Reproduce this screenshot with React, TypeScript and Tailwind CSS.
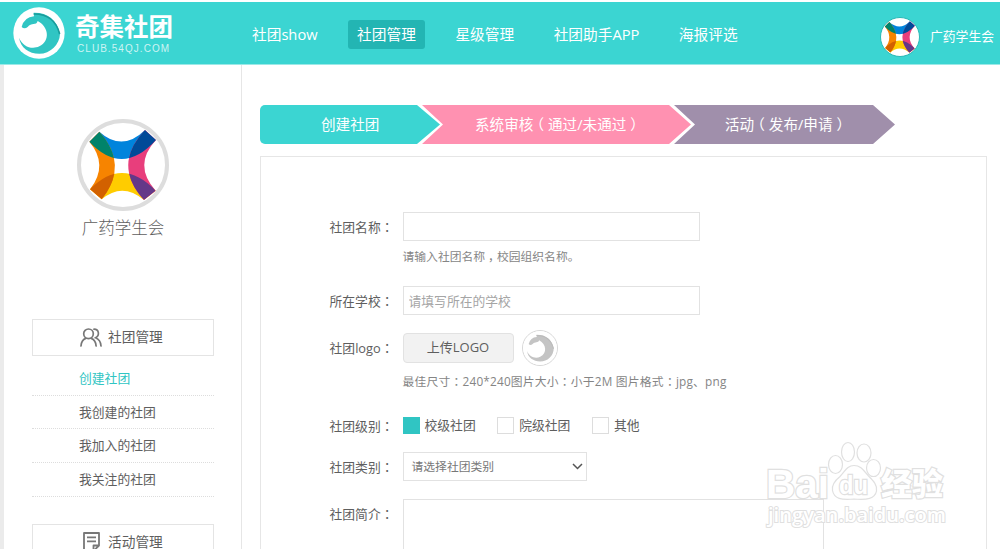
import React from "react";
import clsx from "clsx";

const navItems = [
    { label: "社团show" },
    { label: "社团管理", active: true },
    { label: "星级管理" },
    { label: "社团助手APP" },
    { label: "海报评选" },
];

const clubLinks = ["创建社团", "我创建的社团", "我加入的社团", "我关注的社团"];

const levels = ["校级社团", "院级社团", "其他"];

export default function App() {
    return (
        <div className="h-[549px] overflow-hidden bg-white pt-[2px] font-['Open_Sans','Noto_Sans_CJK_SC',sans-serif] text-[#5e5e5e]">
            <Header />
            <div className="flex h-[484px] border-l-[4px] border-[#ebebeb]">
                <Sidebar />
                <main className="relative flex-1 pl-[18px] pt-[40px]">
                    <Steps />
                    <ClubForm />
                    <Watermark />
                </main>
            </div>
        </div>
    );
}

function Header() {
    return (
        <header className="flex h-[63px] items-center border-b border-[#9be9e7] bg-[#3bd5d2] text-white">
            <div className="flex w-[243px] items-center pl-[13px]">
                <SwirlLogo className="size-[52px]" ring="#fff" swirl="#30c5c3" shade="#1a9c9b" />
                <div className="ml-[10px] mt-[2px]">
                    <div className="text-[24.5px] font-bold leading-[27px]">奇集社团</div>
                    <div className="ml-[2px] mt-[2px] font-['Liberation_Sans',sans-serif] text-[10px] leading-[13px] tracking-[1.05px] text-white/75">
                        CLUB.54QJ.COM
                    </div>
                </div>
            </div>
            <nav className="mt-[3px] flex flex-1 gap-[21.5px] text-[14.7px]">
                {navItems.map((item) => (
                    <a
                        key={item.label}
                        className={clsx("h-[29px] whitespace-nowrap rounded-[3px] px-[9px] leading-[29px]", item.active && "bg-[#23b5b3]")}
                    >
                        {item.label}
                    </a>
                ))}
            </nav>
            <div className="mt-[8px] flex w-[120px] items-center gap-[10px]">
                <div className="size-[40px] shrink-0 rounded-full border border-[#28b9b6] bg-white">
                    <Emblem className="size-full" />
                </div>
                <span className="whitespace-nowrap text-[12.8px]">广药学生会</span>
            </div>
        </header>
    );
}

function Sidebar() {
    return (
        <aside className="w-[238px] border-r border-[#e6e6e6] pl-[28px] pt-[54px]">
            <div className="flex h-[200px] w-[182px] flex-col items-center">
                <div className="size-[92px] rounded-full border-4 border-[#ddd]">
                    <Emblem className="size-full" />
                </div>
                <div className="mt-[4px] text-[16.5px] font-light leading-[26px]">广药学生会</div>
            </div>
            <MenuTitle label="社团管理" icon={<PeopleIcon />} />
            <ul className="mb-[27px] w-[182px] pt-[6px] text-[12.8px]">
                {clubLinks.map((link, idx) => (
                    <li
                        key={link}
                        className={clsx(
                            "h-[33.7px] border-b border-dotted border-[#ddd] pl-[47px] leading-[32px]",
                            idx === 0 && "text-[#30c5c3]"
                        )}
                    >
                        {link}
                    </li>
                ))}
            </ul>
            <MenuTitle label="活动管理" icon={<NoteIcon />} />
        </aside>
    );
}

function MenuTitle({ label, icon }: { label: string; icon: React.ReactNode }) {
    return (
        <div className="flex h-[37px] w-[182px] items-center border border-[#e4e4e4] pl-[47px] text-[13.7px]">
            <span className="mr-[6px] w-[22px]">{icon}</span>
            {label}
        </div>
    );
}

function Steps() {
    return (
        <div className="flex h-[39px] text-[14.6px] leading-[39px] text-white">
            <div className="w-[180px] rounded-l-[5px] bg-[#3bd5d2] pl-[61px] [clip-path:polygon(0_0,157px_0,100%_50%,157px_100%,0_100%)]">
                创建社团
            </div>
            <div className="-ml-[18px] w-[270px] whitespace-nowrap bg-[#ff91b1] pl-[53px] [clip-path:polygon(0_0,247px_0,269px_50%,247px_100%,0_100%,21px_50%)]">
                系统审核<Mark shift="-left-[4px]">（</Mark>通过/未通过<Mark shift="left-[4px]">）</Mark>
            </div>
            <div className="-ml-[18px] w-[221px] whitespace-nowrap bg-[#a08fab] pl-[51px] [clip-path:polygon(0_0,199px_0,100%_50%,199px_100%,0_100%,21px_50%)]">
                活动<Mark shift="-left-[4px]">（</Mark>发布/申请<Mark shift="left-[4px]">）</Mark>
            </div>
        </div>
    );
}

// Nudges full-width punctuation to the middle of its cell
function Mark({ shift, children }: { shift: string; children: React.ReactNode }) {
    return <span className={clsx("relative", shift)}>{children}</span>;
}

function Colon() {
    return <span className="font-['Noto_Sans_CJK_TC',sans-serif]">：</span>;
}

function Row({ label, height, line = "leading-[29px]", children }: { label: string; height: string; line?: string; children: React.ReactNode }) {
    return (
        <div className={clsx("flex", height)}>
            <label className={clsx("mr-[9px] w-[132.5px] shrink-0 text-right text-[12.8px]", line)}>
                {label}
                <Colon />
            </label>
            <div>{children}</div>
        </div>
    );
}

function ClubForm() {
    return (
        <form className="mt-[12px] h-[420px] w-[727px] border border-[#e6e6e6] pt-[55px] text-[12.8px]">
            <Row label="社团名称" height="h-[74px]">
                <input className="block h-[29px] w-[297px] border border-[#e2e2e2] px-[5px]" />
                <p className="mt-[5px] text-[11.8px] leading-[20px] text-[#858585]">
                    请输入社团名称<Mark shift="left-[3px]">，</Mark>校园组织名称。
                </p>
            </Row>
            <Row label="所在学校" height="h-[47px]">
                <input
                    className="block h-[29px] w-[297px] border border-[#e2e2e2] px-[5px] placeholder:text-[#a5a5a5]"
                    placeholder="请填写所在的学校"
                />
            </Row>
            <Row label="社团logo" height="h-[84px]">
                <div className="flex h-[29px] items-center gap-[8px]">
                    <button type="button" className="h-[30px] w-[111px] rounded-[4px] border border-[#e2e2e2] bg-[#f2f2f2] text-[13px]">
                        上传LOGO
                    </button>
                    <div className="size-[36px] rounded-full border-[1.5px] border-[#d8d8d8]">
                        <SwirlLogo className="size-full" ring="#fff" swirl="#c4c4c4" shade="#bbb" />
                    </div>
                </div>
                <p className="mt-[9px] whitespace-nowrap text-[11.8px] leading-[20px] tracking-[0.2px] text-[#858585]">
                    最佳尺寸
                    <Colon />
                    240*240图片大小
                    <Colon />
                    小于2M 图片格式
                    <Colon />
                    jpg、png
                </p>
            </Row>
            <Row label="社团级别" height="h-[35px]" line="leading-[17px]">
                <div className="flex gap-[21.5px]">
                    {levels.map((level, idx) => (
                        <span key={level} className="flex items-center gap-[5px] leading-[17px]">
                            <i className={clsx("size-[17px] border", idx === 0 ? "border-[#30c5c3] bg-[#30c5c3]" : "border-[#ddd]")} />
                            {level}
                        </span>
                    ))}
                </div>
            </Row>
            <Row label="社团类别" height="h-[47px]">
                <div className="flex h-[29px] w-[184px] items-center justify-between border border-[#e2e2e2] pl-[8px] pr-[3px] text-[11.8px] text-[#777]">
                    请选择社团类别
                    <svg className="h-[7px] w-[11px]" viewBox="0 0 11 7" fill="none" stroke="#555" strokeWidth="1.5">
                        <path d="M1 1l4.5 4.5L10 1" />
                    </svg>
                </div>
            </Row>
            <Row label="社团简介" height="h-[100px]">
                <textarea className="block h-[100px] w-[421px] resize-none border border-[#e2e2e2]" />
            </Row>
        </form>
    );
}

function SwirlLogo({ className, ring, swirl, shade }: { className: string; ring: string; swirl: string; shade: string }) {
    return (
        <svg className={className} viewBox="39 20 156 156">
            <circle cx="117" cy="98" r="77" fill={ring} />
            <path
                d="M65 80Q73 50 102 48L101 37Q164 36 180 100A62 62 0 0 1 118 160C86 160 62 142 57 112C68 139 96 149 118 138C151 122 147 80 113 62C109 77 94 66 83 80Q73 88 65 80Z"
                fill={swirl}
            />
            <path d="M101 41Q163 40 179 101" fill="none" stroke={shade} strokeWidth="5" />
        </svg>
    );
}

function Emblem({ className }: { className: string }) {
    return (
        <svg className={className} viewBox="63 69 252 252">
            <defs>
                <clipPath id="band-top">
                    <path d="M118 95Q187 157 255 90L288 120Q187 231 88 125Z" />
                </clipPath>
                <clipPath id="band-bottom">
                    <path d="M125 298Q187 245 252 300L287 272Q187 168 90 268Z" />
                </clipPath>
            </defs>
            <path d="M118 95Q187 157 255 90L288 120Q187 231 88 125Z" fill="#0084dc" />
            <path d="M125 298Q187 245 252 300L287 272Q187 168 90 268Z" fill="#fc0" />
            <path d="M88 125Q147 195 90 268L125 298Q208 195 118 95Z" fill="#f78400" />
            <path d="M288 120Q218 195 287 272L252 300Q156 195 255 90Z" fill="#e83e7c" />
            <g clipPath="url(#band-top)">
                <path d="M88 125Q147 195 90 268L125 298Q208 195 118 95Z" fill="#00836a" />
                <path d="M288 120Q218 195 287 272L252 300Q156 195 255 90Z" fill="#004a98" />
            </g>
            <g clipPath="url(#band-bottom)">
                <path d="M88 125Q147 195 90 268L125 298Q208 195 118 95Z" fill="#d26100" />
                <path d="M288 120Q218 195 287 272L252 300Q156 195 255 90Z" fill="#643888" />
            </g>
        </svg>
    );
}

function PeopleIcon() {
    return (
        <svg className="h-[19px] w-[22px]" viewBox="0 0 22 19" fill="none" stroke="#777" strokeWidth="1.7" strokeLinecap="round">
            <circle cx="8.5" cy="5.8" r="4.8" />
            <path d="M1 18c.2-4 2-6.400 4.700-7.600M11.300 10.400c3 1.300 4.600 3.800 4.800 7.600" />
            <path d="M14 1.200c5 .2 6 6 1.600 8.600 3.400 1.400 5.200 4.200 5.400 8.200" />
        </svg>
    );
}

function NoteIcon() {
    return (
        <svg className="ml-[3px] h-[20px] w-[17px]" viewBox="0 0 17 20" fill="none" stroke="#777" strokeWidth="1.8" strokeLinejoin="round">
            <path d="M1 1h15v12.500L10.500 19H1zM16 13.500h-5.500V19M4 5.300h9M4 9.300h9" />
        </svg>
    );
}

function Watermark() {
    return (
        <svg
            className="pointer-events-none absolute left-[518px] top-[370px] h-[100px] w-[190px]"
            viewBox="760 435 190 100"
            fill="#fff"
            stroke="#e0e0e0"
            strokeWidth="1.2"
        >
            <g className="font-['Liberation_Sans','Noto_Sans_CJK_SC',sans-serif]" fontWeight="bold" paintOrder="stroke" strokeWidth="2.4">
                <text x="766" y="498" fontSize="40" textLength="63" lengthAdjust="spacingAndGlyphs">Bai</text>
                <text x="881" y="495" fontSize="31" fontWeight="900">经验</text>
            </g>
            <ellipse cx="835.5" cy="464.5" rx="7" ry="9" />
            <ellipse cx="848" cy="452" rx="6.5" ry="9.5" />
            <ellipse cx="864" cy="453" rx="7" ry="9" />
            <ellipse cx="873.5" cy="468" rx="7" ry="8.5" />
            <path d="M854 465.500c-7 0-9 6-14 11-5 4-8.500 8-7.500 14 1.500 8.500 9 9.500 21.500 8.500 13 1 21 0 22.500-8 1-6-3-10-8-15-4.500-5-7.500-10.500-14.500-10.500z" />
            <text x="839" y="494" fontSize="25" fontWeight="bold" paintOrder="stroke" strokeWidth="2.4" textLength="29" lengthAdjust="spacingAndGlyphs" className="font-['Liberation_Sans',sans-serif]">
                du
            </text>
            <text x="768" y="522" fontSize="20" fontWeight="600" paintOrder="stroke" strokeWidth="2" textLength="178" lengthAdjust="spacingAndGlyphs">
                jingyan.baidu.com
            </text>
        </svg>
    );
}
